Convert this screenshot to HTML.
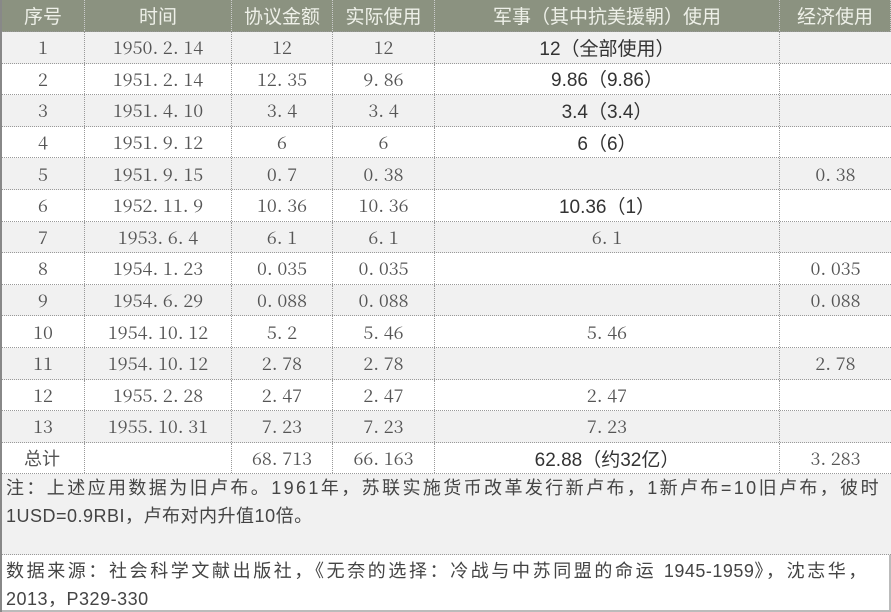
<!DOCTYPE html>
<html><head><meta charset="utf-8"><style>
*{margin:0;padding:0;box-sizing:border-box}
body{width:891px;height:612px;overflow:hidden;background:#fff;position:relative;font-family:"Liberation Sans","Noto Sans CJK SC",sans-serif}
.r{position:absolute;left:2px;width:889px;border-bottom:1px dotted #999}
.c{position:absolute;top:0;height:100%;display:flex;align-items:center;justify-content:center;border-right:1px dotted #999;font-family:"Noto Serif CJK SC",serif;font-size:18px;color:#555}
.h .c{color:#eef0e8;font-family:"Noto Sans CJK SC",sans-serif;font-size:19px;border-right:1px dotted #ccc}
.b{font-family:"Liberation Sans","Noto Sans CJK SC",sans-serif!important;color:#333!important;font-size:19px!important}
.c1{left:0;width:83px}.c2{left:83px;width:147px}.c3{left:230px;width:101px}.c4{left:331px;width:102px}.c5{left:433px;width:345px}.c6{left:778px;width:111px;border-right:none}
.n{position:absolute;left:2px;width:889px;font-size:18px;color:#444;padding-left:4px;line-height:28px;white-space:nowrap;letter-spacing:2.4px;overflow:hidden}
</style></head><body>
<div style="position:absolute;left:0;top:0;width:2px;height:612px;background:#888"></div>
<div style="position:absolute;right:0;top:474px;width:2px;height:138px;background:#bbb"></div>
<div class="r h" style="top:0;height:32px;background:#8b9280"><div class="c c1">序号</div><div class="c c2">时间</div><div class="c c3">协议金额</div><div class="c c4">实际使用</div><div class="c c5">军事（其中抗美援朝）使用</div><div class="c c6">经济使用</div></div>
<div id="rows"></div>
<div class="n" style="top:474px;height:81px;background:#f1f1f1;border-bottom:1px dotted #999;padding-top:0">注：上述应用数据为旧卢布。1961年，苏联实施货币改革发行新卢布，1新卢布=10旧卢布，彼时<br><span style="letter-spacing:0.5px">1USD=0.9RBI，卢布对内升值10倍。</span></div>
<div class="n" style="top:557px;height:55px;border-bottom:2px solid #bbb;letter-spacing:2.6px">数据来源：社会科学文献出版社，《无奈的选择：冷战与中苏同盟的命运 <span style="letter-spacing:0.5px">1945-1959</span>》，沈志华，<br><span style="letter-spacing:0.5px">2013，P329-330</span></div>
<script>
var d=[["1","1950.2.14","12","12","12（全部使用）","",1],["2","1951.2.14","12.35","9.86","9.86（9.86）","",1],["3","1951.4.10","3.4","3.4","3.4（3.4）","",1],["4","1951.9.12","6","6","6（6）","",1],["5","1951.9.15","0.7","0.38","","0.38",0],["6","1952.11.9","10.36","10.36","10.36（1）","",1],["7","1953.6.4","6.1","6.1","6.1","",0],["8","1954.1.23","0.035","0.035","","0.035",0],["9","1954.6.29","0.088","0.088","","0.088",0],["10","1954.10.12","5.2","5.46","5.46","",0],["11","1954.10.12","2.78","2.78","","2.78",0],["12","1955.2.28","2.47","2.47","2.47","",0],["13","1955.10.31","7.23","7.23","7.23","",0],["总计","","68.713","66.163","62.88（约32亿）","3.283",1]];
var h="";
d.forEach(function(r,i){var t=32+i*31.6;var sp=function(s){return s.replace(/\./g,'. ').replace(/\. $/,'.')};
h+='<div class="r" style="top:'+t+'px;height:31.6px;background:'+(i%2==0?'#f1f1f1':'#fff')+'">'+
'<div class="c c1"'+(i==13?' style="justify-content:flex-start;padding-left:22px;font-family:Noto Sans CJK SC"':'')+'>'+r[0]+'</div><div class="c c2">'+sp(r[1])+'</div><div class="c c3">'+sp(r[2])+'</div><div class="c c4">'+sp(r[3])+'</div><div class="c c5'+(r[6]?' b':'')+'">'+(r[6]?r[4]:sp(r[4]))+'</div><div class="c c6">'+sp(r[5])+'</div></div>';});
document.getElementById("rows").innerHTML=h;
</script>
</body></html>
